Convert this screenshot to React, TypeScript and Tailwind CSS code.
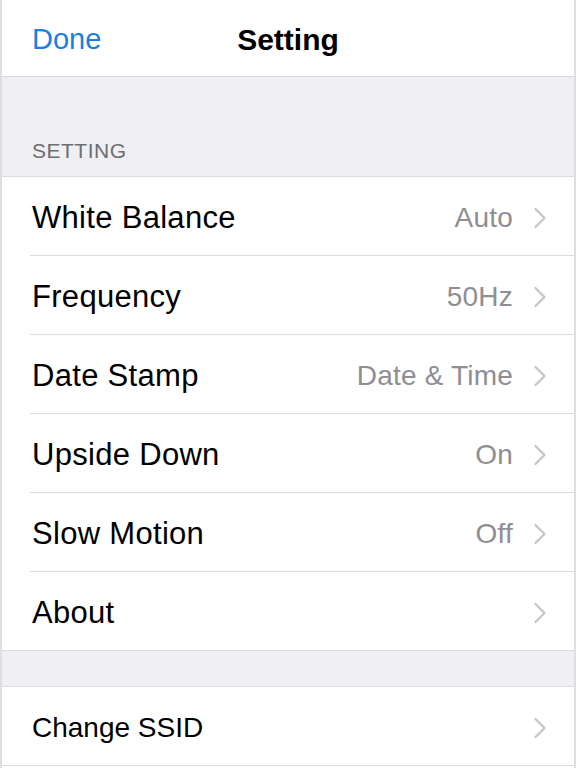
import React from "react";

const Chevron = () => (
  <svg width="14" height="22" viewBox="0 0 14 22" fill="none" className="shrink-0">
    <path d="M2.5 2 L11.5 11 L2.5 20" stroke="#c4c4c9" strokeWidth="2.2" strokeLinecap="round" strokeLinejoin="round" />
  </svg>
);

type Item = { label: string; value?: string };

const items: Item[] = [
  { label: "White Balance", value: "Auto" },
  { label: "Frequency", value: "50Hz" },
  { label: "Date Stamp", value: "Date & Time" },
  { label: "Upside Down", value: "On" },
  { label: "Slow Motion", value: "Off" },
  { label: "About" },
];

function Row({ item }: { item: Item }) {
  return (
    <div className="pl-[28px] bg-white">
      <div className="h-[79px] flex items-center pt-[4px] pr-[27px] border-b border-[#dcdcdf]">
        <span className="pl-[2px] text-[31px] text-black tracking-[0.3px] flex-1">{item.label}</span>
        {item.value && (
          <span className="text-[28px] text-[#8e8e93] mr-[20px] tracking-[0.2px]">{item.value}</span>
        )}
        <Chevron />
      </div>
    </div>
  );
}

function LastRow({ item }: { item: Item }) {
  return (
    <div className="h-[79px] flex items-center pt-[4px] pl-[30px] pr-[27px] border-b border-[#dcdcdf] bg-white">
      <span className="text-[31px] text-black tracking-[0.3px] flex-1">{item.label}</span>
      {item.value && (
        <span className="text-[28px] text-[#8e8e93] mr-[20px] tracking-[0.2px]">{item.value}</span>
      )}
      <Chevron />
    </div>
  );
}

export default function App() {
  const head = items.slice(0, items.length - 1);
  const last = items[items.length - 1];
  return (
    <div
      className="w-[576px] h-[768px] overflow-hidden bg-white border-l-2 border-r-2 border-[#dedee2] flex flex-col"
      style={{ fontFamily: '"Liberation Sans", Arial, sans-serif' }}
    >
      <div className="h-[77px] shrink-0 relative flex items-center pt-[3px] border-b border-[#d9d9dd] bg-white">
        <span className="pl-[30px] text-[29px] text-[#1a80e0]">Done</span>
        <span className="absolute left-0 right-0 text-center text-[30px] font-bold text-black pointer-events-none">
          Setting
        </span>
      </div>
      <div className="h-[100px] shrink-0 bg-[#efeff4] border-b border-[#dcdcdf] flex items-end pl-[30px] pb-[10px]">
        <span className="text-[21px] text-[#6d6d72] tracking-[0.5px]">SETTING</span>
      </div>
      <div className="bg-white">
        {head.map((it) => (
          <Row key={it.label} item={it} />
        ))}
        <LastRow item={last} />
      </div>
      <div className="h-[36px] shrink-0 bg-[#efeff4] border-b border-[#dcdcdf]" />
      <div className="bg-white">
        <div className="h-[79px] flex items-center pt-[3px] pl-[30px] pr-[27px] border-b border-[#dcdcdf]">
          <span className="text-[28px] text-black flex-1">Change SSID</span>
          <Chevron />
        </div>
      </div>
    </div>
  );
}
